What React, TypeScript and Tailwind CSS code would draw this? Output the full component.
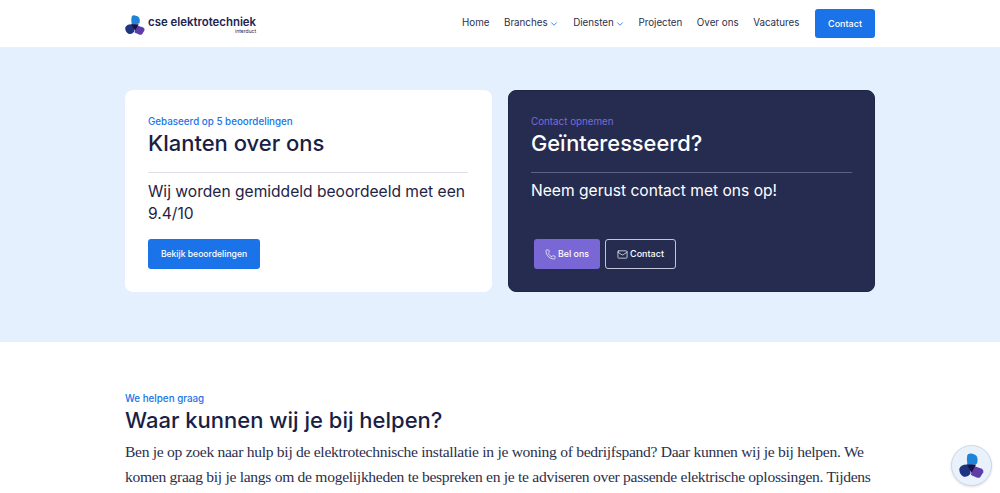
import { ChevronDown, Phone, Mail } from "lucide-react";

const poppins = "font-['Inter','Liberation_Sans',sans-serif]";

function Logo({ size }: { size: number }) {
  return (
    <svg width={size} height={size} viewBox="0 0 24 24" aria-hidden="true">
      <path d="M8 2 Q9 0 12 .5 L15 1.5 Q17.5 2.5 17.8 6 L17.5 10 L11 12 L8 11 Q7 6 8 2Z" fill="#1f84d6" />
      <path d="M7.5 11 L11 12 L11 20 Q8 24 4 22.5 Q0 20 .3 15 Q2 11 7.5 11Z" fill="#1d3480" />
      <path d="M13 12 L22 15 Q24 16.5 23.3 18.5 L20.5 23 Q19.5 24 17.5 23.8 L11.5 21Z" fill="#5d3ea8" />
      <path d="M7.5 11 L16.5 11 L12 19Z" fill="#1a1147" />
    </svg>
  );
}

function NavLink({ label, caret }: { label: string; caret?: boolean }) {
  return (
    <span className="flex items-center gap-[1px] text-[#2b2f4d]">
      {label}
      {caret && <ChevronDown size={10} strokeWidth={2.25} className="text-[#2f86e6]" />}
    </span>
  );
}

export default function App() {
  return (
    <div className={`h-[493px] overflow-hidden bg-white relative ${poppins}`}>
      <header className="h-[47px] flex items-center justify-center bg-white">
        <div className="w-[750px] flex items-center justify-between">
          <div className="flex items-center gap-[3px] pt-[2px]">
            <Logo size={20} />
            <div className="flex flex-col items-end leading-none">
              <span className="text-[11.4px] font-semibold text-[#1c2452] leading-[13px]">cse elektrotechniek</span>
              <span className="text-[5px] text-[#1c2452] leading-[5px]">interduct</span>
            </div>
          </div>
          <nav className="flex items-center gap-[14.5px] text-[9.8px]">
            <NavLink label="Home" />
            <NavLink label="Branches" caret />
            <NavLink label="Diensten" caret />
            <span className="ml-[-1px]"><NavLink label="Projecten" /></span>
            <NavLink label="Over ons" />
            <NavLink label="Vacatures" />
            <span className="ml-[1px] w-[60px] h-[29px] rounded-[3px] bg-[#1a73e8] text-white text-[9px] font-medium flex items-center justify-center">Contact</span>
          </nav>
        </div>
      </header>

      <section className="h-[295px] bg-[#e4f0fd] flex justify-center pt-[43px]">
        <div className="w-[750px] h-[202px] flex gap-4">
          <div className="w-[367px] rounded-[8px] bg-white pt-[24px] px-[23px]">
            <p className="text-[9.8px] font-medium text-[#1a73e8] leading-[16px] mb-[-2px]">Gebaseerd op 5 beoordelingen</p>
            <h2 className="text-[22px] font-medium text-[#1a1f45] leading-[30px]">Klanten over ons</h2>
            <div className="h-px bg-[#dfe1e6] mt-[14px] w-[320px]" />
            <p className="text-[15.6px] text-[#1f2344] leading-[22px] mt-[8px] w-[325px]">Wij worden gemiddeld beoordeeld met een 9.4/10</p>
            <span className="mt-[14px] w-[112px] h-[30px] rounded-[3px] bg-[#1a73e8] text-white text-[8.6px] font-medium flex items-center justify-center">Bekijk beoordelingen</span>
          </div>
          <div className="w-[367px] rounded-[8px] bg-[#262c50] border border-[#1f2547] pt-[23px] px-[22px]">
            <p className="text-[9.8px] text-[#7a6bd8] leading-[16px] mb-[-2px]">Contact opnemen</p>
            <h2 className="text-[21.8px] font-medium text-white leading-[30px]">Geïnteresseerd?</h2>
            <div className="h-px bg-[#5d6283] mt-[14px] w-[321px]" />
            <p className="text-[15.6px] text-white leading-[22px] mt-[7px]">Neem gerust contact met ons op!</p>
            <div className="mt-[37px] ml-[3px] flex gap-[5px]">
              <span className="w-[66px] h-[30px] rounded-[3px] bg-[#7a67d6] text-white text-[8.8px] font-medium flex items-center justify-center gap-[2px]">
                <Phone size={11} strokeWidth={1.5} />Bel ons
              </span>
              <span className="w-[71px] h-[30px] rounded-[3px] border border-[#c3c6d6] text-white text-[9px] font-medium flex items-center justify-center gap-[2px]">
                <Mail size={11} strokeWidth={1.5} />Contact
              </span>
            </div>
          </div>
        </div>
      </section>

      <section className="flex justify-center pt-[49px]">
        <div className="w-[750px]">
          <p className="text-[9.8px] font-medium text-[#1a73e8] leading-[16px] mb-[-2px]">We helpen graag</p>
          <h2 className="text-[22px] font-medium text-[#1a1f45] leading-[28px] mt-[1px]">Waar kunnen wij je bij helpen?</h2>
          <p className="font-['Liberation_Serif',serif] text-[15.6px] tracking-[-0.3px] text-[#2b2f4d] leading-[25px] mt-[5px]">
            Ben je op zoek naar hulp bij de elektrotechnische installatie in je woning of bedrijfspand? Daar kunnen wij je bij helpen. We komen graag bij je langs om de mogelijkheden te bespreken en je te adviseren over passende elektrische oplossingen. Tijdens ons gesprek kijken we naar de wensen en de mogelijkheden ter plaatse. Zo krijg je direct inzicht in de aanpak en de kosten.
          </p>
        </div>
      </section>

      <div className="absolute left-[951px] top-[445px] w-[41px] h-[41px] rounded-full bg-[#e8f1fc] border border-[#cfd8e6] shadow-sm flex items-center justify-center">
        <Logo size={25} />
      </div>
    </div>
  );
}
